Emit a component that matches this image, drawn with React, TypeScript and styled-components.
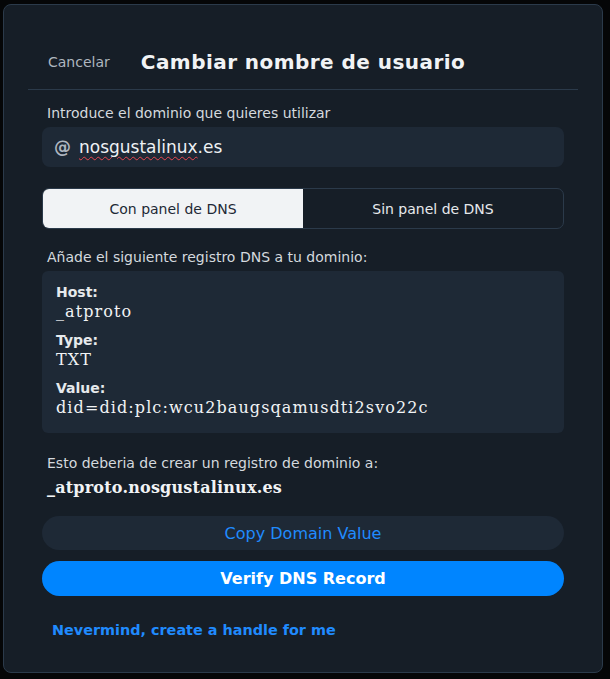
import styled, { createGlobalStyle } from "styled-components";

const GlobalStyle = createGlobalStyle`
  html, body {
    margin: 0;
    padding: 0;
    background: #050607;
  }
  body {
    font-family: "DejaVu Sans", sans-serif;
  }
`;

const Page = styled.div`
  padding: 4px 0 0 3px;
  height: 679px;
  box-sizing: border-box;
  overflow: hidden;
`;

const Dialog = styled.div`
  width: 600px;
  height: 669px;
  box-sizing: border-box;
  background: #161e27;
  border: 1px solid #2b3a4a;
  border-radius: 8px;
  padding: 0 24px;
`;

const Header = styled.div`
  display: flex;
  align-items: center;
  height: 85px;
  padding: 29px 20px 0;
  box-sizing: border-box;
  border-bottom: 1px solid #2b3a4a;
`;

const CancelLink = styled.span`
  font-size: 14px;
  color: #aeb6bf;
  margin-right: 31px;
`;

const Title = styled.h1`
  margin: 0;
  font-size: 20px;
  font-weight: 700;
  color: #f1f3f5;
  letter-spacing: 0.45px;
`;

const Body = styled.div`
  padding: 14px 14px 0;
  display: flex;
  flex-direction: column;
`;

const Label = styled.div<{ $mt?: number }>`
  font-size: 14px;
  color: #d4d9de;
  padding-left: 5px;
  margin-top: ${(p) => p.$mt ?? 0}px;
  line-height: 18px;
`;

const InputBox = styled.div`
  margin-top: 5px;
  height: 40px;
  background: #1e2936;
  border-radius: 8px;
  display: flex;
  align-items: center;
  padding: 0 12px;
  gap: 8px;
`;

const AtSign = styled.span`
  font-size: 17px;
  font-weight: 600;
  color: #aeb6bf;
`;

const InputText = styled.span`
  font-size: 17px;
  color: #eef1f4;
`;

const Misspelled = styled.span`
  text-decoration: underline wavy #e8474f;
  text-decoration-thickness: 1px;
  text-underline-offset: 3px;
`;

const Toggle = styled.div`
  margin-top: 21px;
  height: 39px;
  display: grid;
  grid-template-columns: 1fr 1fr;
  border: 1px solid #2b3a4a;
  border-radius: 7px;
  overflow: hidden;
`;

const ToggleOption = styled.div<{ $active?: boolean }>`
  display: flex;
  align-items: center;
  justify-content: center;
  font-size: 14px;
  background: ${(p) => (p.$active ? "#f1f3f5" : "transparent")};
  color: ${(p) => (p.$active ? "#1e2936" : "#e6e9ec")};
`;

const RecordBox = styled.div`
  margin-top: 5px;
  background: #1e2936;
  border-radius: 6px;
  padding: 12px 14px 14px;
  display: flex;
  flex-direction: column;
`;

const FieldLabel = styled.div<{ $mt?: number }>`
  font-size: 14px;
  font-weight: 600;
  color: #e6e9ec;
  line-height: 18px;
  margin-top: ${(p) => p.$mt ?? 0}px;
`;

const FieldValue = styled.div<{ $bold?: boolean }>`
  font-family: "DejaVu Serif", serif;
  font-size: 16px;
  font-weight: ${(p) => (p.$bold ? 700 : 400)};
  letter-spacing: ${(p) => (p.$bold ? 0.2 : 1.1)}px;
  color: #f1f3f5;
  line-height: 22px;
`;

const ResultValue = styled(FieldValue)`
  padding-left: 5px;
  margin-top: 5px;
`;

const PillButton = styled.button<{ $primary?: boolean; $mt: number }>`
  margin-top: ${(p) => p.$mt}px;
  height: ${(p) => (p.$primary ? 35 : 34)}px;
  border: none;
  border-radius: 18px;
  font-family: "DejaVu Sans", sans-serif;
  font-size: 16px;
  font-weight: ${(p) => (p.$primary ? 600 : 400)};
  background: ${(p) => (p.$primary ? "#0085ff" : "#1e2936")};
  color: ${(p) => (p.$primary ? "#ffffff" : "#208bfe")};
  cursor: pointer;
`;

const NevermindLink = styled.div`
  margin-top: 26px;
  padding-left: 10px;
  font-size: 14.4px;
  font-weight: 600;
  color: #208bfe;
`;

export default function App() {
  return (
    <>
      <GlobalStyle />
      <Page>
        <Dialog>
          <Header>
            <CancelLink>Cancelar</CancelLink>
            <Title>Cambiar nombre de usuario</Title>
          </Header>
          <Body>
            <Label>Introduce el dominio que quieres utilizar</Label>
            <InputBox>
              <AtSign>@</AtSign>
              <InputText>
                <Misspelled>nosgustalinux</Misspelled>.es
              </InputText>
            </InputBox>
            <Toggle>
              <ToggleOption $active>Con panel de DNS</ToggleOption>
              <ToggleOption>Sin panel de DNS</ToggleOption>
            </Toggle>
            <Label $mt={19}>Añade el siguiente registro DNS a tu dominio:</Label>
            <RecordBox>
              <FieldLabel>Host:</FieldLabel>
              <FieldValue>_atproto</FieldValue>
              <FieldLabel $mt={8}>Type:</FieldLabel>
              <FieldValue>TXT</FieldValue>
              <FieldLabel $mt={8}>Value:</FieldLabel>
              <FieldValue>did=did:plc:wcu2baugsqamusdti2svo22c</FieldValue>
            </RecordBox>
            <Label $mt={21}>Esto deberia de crear un registro de dominio a:</Label>
            <ResultValue $bold>_atproto.nosgustalinux.es</ResultValue>
            <PillButton $mt={17}>Copy Domain Value</PillButton>
            <PillButton $mt={11} $primary>
              Verify DNS Record
            </PillButton>
            <NevermindLink>Nevermind, create a handle for me</NevermindLink>
          </Body>
        </Dialog>
      </Page>
    </>
  );
}
